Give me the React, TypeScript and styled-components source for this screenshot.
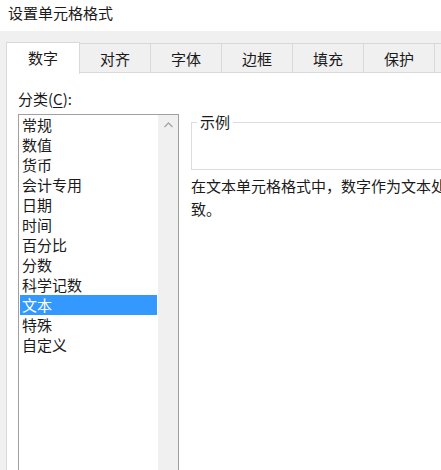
import styled, { createGlobalStyle } from "styled-components";

const GlobalStyle = createGlobalStyle`
  html, body {
    margin: 0;
    padding: 0;
    overflow: hidden;
    background: #ffffff;
  }
  body {
    font-family: "Noto Sans CJK SC", "Noto Sans", sans-serif;
    color: #1a1a1a;
  }
`;

const tabs = ["数字", "对齐", "字体", "边框", "填充", "保护", ""];

const categories = [
  "常规",
  "数值",
  "货币",
  "会计专用",
  "日期",
  "时间",
  "百分比",
  "分数",
  "科学记数",
  "文本",
  "特殊",
  "自定义",
];

const App = () => {
  return (
    <>
      <GlobalStyle />
      <Dialog>
        <TitleBar>设置单元格格式</TitleBar>
        <TabStrip>
          {tabs.map((tab, i) => (
            <Tab key={i} $active={i === 0}>
              {tab}
            </Tab>
          ))}
        </TabStrip>
        <Body>
          <Panel>
            <LeftColumn>
              <Label>
                分类(<u>C</u>):
              </Label>
              <ListBox>
                <ListItems>
                  {categories.map((c) => (
                    <ListItem key={c} $selected={c === "文本"}>
                      {c}
                    </ListItem>
                  ))}
                </ListItems>
                <ScrollTrack>
                  <ScrollArrow>
                    <svg width="9" height="6" viewBox="0 0 9 6">
                      <path d="M0.5 5 L4.5 1 L8.5 5" fill="none" stroke="#a6a6a6" strokeWidth="1.3" />
                    </svg>
                  </ScrollArrow>
                </ScrollTrack>
              </ListBox>
            </LeftColumn>
            <RightColumn>
              <SampleGroup>
                <SampleLegend>示例</SampleLegend>
              </SampleGroup>
              <Description>
                <Line>在文本单元格格式中，数字作为文本处理。单元格显示的内容与输入的内容完全一</Line>
                <Line>致。</Line>
              </Description>
            </RightColumn>
          </Panel>
        </Body>
      </Dialog>
    </>
  );
};

export default App;

const Dialog = styled.div`
  width: 441px;
  height: 470px;
  overflow: hidden;
  display: flex;
  flex-direction: column;
  background: #ffffff;
  font-size: 15px;
`;

const TitleBar = styled.div`
  height: 31px;
  padding-left: 8px;
  line-height: 26px;
  font-size: 15px;
  color: #1a1a1a;
  flex-shrink: 0;
`;

const TabStrip = styled.div`
  display: flex;
  align-items: flex-end;
  height: 42px;
  padding-left: 6px;
  background: #f0f0f0;
  flex-shrink: 0;
  position: relative;
  z-index: 1;
`;

const Tab = styled.div<{ $active: boolean }>`
  width: 72px;
  flex-shrink: 0;
  box-sizing: border-box;
  height: ${({ $active }) => ($active ? "32px" : "30px")};
  margin-bottom: ${({ $active }) => ($active ? "-1px" : "0")};
  margin-left: -1px;
  border: 1px solid #d9d9d9;
  border-bottom: ${({ $active }) => ($active ? "none" : "1px solid #d9d9d9")};
  background: ${({ $active }) => ($active ? "#ffffff" : "#f0f0f0")};
  display: flex;
  align-items: center;
  justify-content: center;
  padding-bottom: ${({ $active }) => ($active ? "2px" : "0")};
  font-size: 15px;
  color: #1a1a1a;
  &:first-child {
    margin-left: 0;
    width: 74px;
  }
`;

const Body = styled.div`
  flex: 1;
  display: flex;
  background: #f0f0f0;
  padding-left: 6px;
`;

const Panel = styled.div`
  flex: 1;
  display: flex;
  gap: 12px;
  background: #ffffff;
  border-left: 1px solid #d9d9d9;
  padding: 16px 0 0 11px;
  min-width: 0;
`;

const LeftColumn = styled.div`
  display: flex;
  flex-direction: column;
  width: 161px;
  flex-shrink: 0;
`;

const Label = styled.div`
  height: 20px;
  line-height: 20px;
  margin-bottom: 5px;
  color: #1a1a1a;
  u {
    text-decoration-thickness: 1px;
    text-underline-offset: 2px;
  }
`;

const ListBox = styled.div`
  display: flex;
  height: 420px;
  border: 1px solid #a0a0a0;
  background: #ffffff;
`;

const ListItems = styled.div`
  flex: 1;
  padding: 0 1px;
`;

const ListItem = styled.div<{ $selected: boolean }>`
  height: 20px;
  line-height: 20px;
  padding-left: 2px;
  color: ${({ $selected }) => ($selected ? "#ffffff" : "#1a1a1a")};
  background: ${({ $selected }) => ($selected ? "#3399ff" : "transparent")};
`;

const ScrollTrack = styled.div`
  width: 20px;
  background: #f0f0f0;
  display: flex;
  flex-direction: column;
`;

const ScrollArrow = styled.div`
  height: 20px;
  display: flex;
  align-items: center;
  justify-content: center;
`;

const RightColumn = styled.div`
  display: flex;
  flex-direction: column;
  padding-top: 23px;
  min-width: 0;
`;

const SampleGroup = styled.fieldset`
  margin: 0;
  width: 300px;
  height: 58px;
  box-sizing: border-box;
  border: 1px solid #dcdcdc;
  padding: 0 0 0 5px;
`;

const SampleLegend = styled.legend`
  padding: 0 3px;
  line-height: 20px;
  font-size: 15px;
  color: #1a1a1a;
`;

const Description = styled.div`
  margin-top: 4px;
  line-height: 23px;
  color: #1a1a1a;
`;

const Line = styled.div`
  white-space: nowrap;
`;
